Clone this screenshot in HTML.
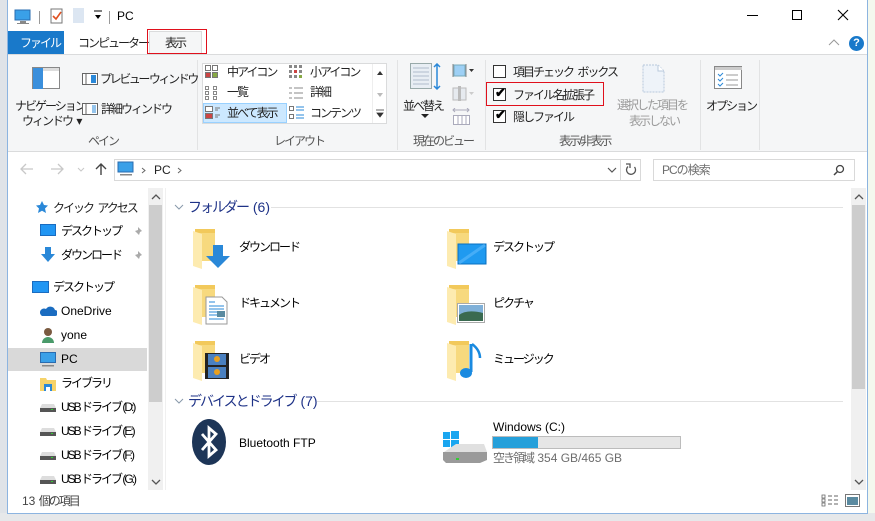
<!DOCTYPE html>
<html><head><meta charset="utf-8"><style>
*{margin:0;padding:0;box-sizing:border-box}
body{width:875px;height:521px;overflow:hidden;background:#e9ecef;font-family:"Liberation Sans","Noto Sans CJK JP",sans-serif;font-size:12px;color:#000;position:relative;letter-spacing:-2px;word-spacing:3px}
.a{position:absolute;white-space:nowrap}
.t{position:absolute;white-space:nowrap;line-height:14px}
.l{letter-spacing:0;word-spacing:0}
.m{letter-spacing:-1px}
.u{letter-spacing:-2px;word-spacing:0}
.sep{position:absolute;width:1px;background:#e2e3e4}
.cb{position:absolute;width:13px;height:13px;border:1px solid #333;background:#fff}
.ck{position:absolute;left:1px;top:-3px;font-size:13px;font-weight:bold;line-height:14px;letter-spacing:0}
.nav{position:absolute;left:61px;white-space:nowrap;line-height:14px}
</style></head><body>
<div class="a" style="left:867px;top:0;width:8px;height:521px;background:#f4f8ee"></div>
<div class="a" style="left:0;top:0;width:7px;height:521px;background:#dfe3e8"></div>
<div class="a" style="left:0;top:513px;width:875px;height:8px;background:#e6e8ea"></div>
<div class="a" style="left:7px;top:0;width:861px;height:514px;background:#fff;border:1px solid #8cb4e0;border-top:none"></div>
<!-- title bar -->
<svg class="a" style="left:14px;top:9px" width="18" height="16"><rect x="1" y="1" width="15" height="10" fill="#3aa0e8" stroke="#2a6cb0"/><rect x="6" y="12" width="6" height="2" fill="#888"/><rect x="3" y="14" width="12" height="1" fill="#888"/></svg>
<div class="a" style="left:39px;top:11px;width:1px;height:13px;background:#999"></div>
<svg class="a" style="left:50px;top:7px" width="14" height="18"><rect x="1" y="2" width="11" height="14" fill="#fff" stroke="#777"/><path d="M3 9l3 3 5-7" stroke="#e05020" stroke-width="1.6" fill="none"/></svg>
<svg class="a" style="left:73px;top:8px" width="14" height="16"><rect x="0" y="0" width="11" height="15" fill="#dce6f2"/></svg>
<svg class="a" style="left:93px;top:10px" width="10" height="10"><path d="M1 1h8" stroke="#000"/><path d="M2 5h6l-3 4z" fill="#000"/></svg>
<div class="a" style="left:109px;top:11px;width:1px;height:13px;background:#999"></div>
<div class="t l" style="left:117px;top:9px">PC</div>
<div class="a" style="left:747px;top:15px;width:11px;height:1px;background:#000"></div>
<div class="a" style="left:792px;top:10px;width:10px;height:10px;border:1px solid #000"></div>
<svg class="a" style="left:837px;top:9px" width="12" height="12"><path d="M1 1L11 11M11 1L1 11" stroke="#000" stroke-width="1.1"/></svg>
<!-- tabs -->
<div class="a" style="left:8px;top:31px;width:56px;height:23px;background:#1979ca"></div>
<div class="t" style="left:20px;top:36px;color:#fff">ファイル</div>
<div class="t" style="left:78px;top:36px;color:#222">コンピューター</div>
<div class="a" style="left:149px;top:31px;width:53px;height:24px;background:#f5f6f7;border:1px solid #dadbdc;border-bottom:none"></div>
<div class="a" style="left:147px;top:29px;width:60px;height:25px;border:1px solid #e0101c"></div>
<div class="t" style="left:165px;top:36px;color:#222">表示</div>
<svg class="a" style="left:828px;top:39px" width="12" height="8"><path d="M1 6L6 1L11 6" stroke="#999" fill="none"/></svg>
<div class="a l" style="left:849px;top:36px;width:15px;height:15px;border-radius:50%;background:#1979ca;color:#fff;font-weight:bold;font-size:11px;text-align:center;line-height:15px">?</div>
<!-- ribbon -->
<div class="a" style="left:8px;top:54px;width:859px;height:98px;background:#f5f6f7;border-top:1px solid #dadbdc;border-bottom:1px solid #dadbdc"></div>
<div class="sep" style="left:197px;top:60px;height:90px"></div>
<div class="sep" style="left:397px;top:60px;height:90px"></div>
<div class="sep" style="left:485px;top:60px;height:90px"></div>
<div class="sep" style="left:700px;top:60px;height:90px"></div>
<div class="sep" style="left:759px;top:60px;height:90px"></div>
<svg class="a" style="left:32px;top:67px" width="28" height="23"><rect x="0.5" y="0.5" width="27" height="21" fill="#fff" stroke="#888"/><rect x="1" y="1" width="10" height="21" fill="#3a8fdc"/><rect x="11" y="1" width="16" height="3" fill="#ddd"/></svg>
<div class="t" style="left:15px;top:99px;color:#222">ナビゲーション</div>
<div class="t" style="left:22px;top:114px;color:#222">ウィンドウ ▾</div>
<svg class="a" style="left:82px;top:73px" width="16" height="12"><rect x="0.5" y="0.5" width="15" height="11" fill="#fff" stroke="#666"/><rect x="9" y="2" width="5" height="8" fill="#2a88d8"/><line x1="4" y1="1" x2="4" y2="11" stroke="#666"/></svg>
<div class="t u" style="left:100px;top:72px;color:#222;letter-spacing:-2.4px">プレビュー ウィンドウ</div>
<svg class="a" style="left:82px;top:103px" width="16" height="12"><rect x="0.5" y="0.5" width="15" height="11" fill="#fff" stroke="#666"/><path d="M10 3h4M10 5h4M10 7h4M10 9h4" stroke="#2a88d8"/><line x1="4" y1="1" x2="4" y2="11" stroke="#666"/></svg>
<div class="t" style="left:101px;top:102px;color:#222">詳細ウィンドウ</div>
<div class="t" style="left:88px;top:134px;color:#555">ペイン</div>
<!-- layout -->
<div class="a" style="left:202px;top:63px;width:185px;height:61px;background:#fff;border:1px solid #dadbdc"></div>
<div class="a" style="left:203px;top:103px;width:84px;height:20px;background:#cce8ff;border:1px solid #99d1ff"></div>
<svg class="a" style="left:205px;top:65px" width="14" height="14"><rect x="0.5" y="0.5" width="5" height="5" fill="#fff" stroke="#777"/><rect x="7.5" y="0.5" width="5" height="5" fill="#fff" stroke="#777"/><rect x="0.5" y="7.5" width="5" height="5" fill="#c44" stroke="#777"/><rect x="7.5" y="7.5" width="5" height="5" fill="#8a4" stroke="#777"/></svg>
<div class="t" style="left:227px;top:65px;color:#222">中アイコン</div>
<svg class="a" style="left:289px;top:65px" width="14" height="14"><g fill="#888"><rect x="0" y="0" width="3" height="3"/><rect x="5" y="0" width="3" height="3"/><rect x="10" y="0" width="3" height="3"/><rect x="0" y="5" width="3" height="3"/><rect x="5" y="5" width="3" height="3" fill="#c44"/><rect x="10" y="5" width="3" height="3"/><rect x="0" y="10" width="3" height="3"/><rect x="5" y="10" width="3" height="3"/><rect x="10" y="10" width="3" height="3" fill="#8a4"/></g></svg>
<div class="t" style="left:310px;top:65px;color:#222">小アイコン</div>
<svg class="a" style="left:205px;top:86px" width="14" height="14"><g fill="none" stroke="#888"><rect x="0.5" y="0.5" width="3" height="3"/><rect x="0.5" y="5.5" width="3" height="3"/><rect x="0.5" y="10.5" width="3" height="3"/><rect x="8.5" y="0.5" width="3" height="3"/><rect x="8.5" y="5.5" width="3" height="3"/><rect x="8.5" y="10.5" width="3" height="3"/></g></svg>
<div class="t" style="left:227px;top:85px;color:#222">一覧</div>
<svg class="a" style="left:289px;top:86px" width="14" height="14"><g stroke="#888"><path d="M0 2h3M5 2h9M0 7h3M5 7h9M0 12h3M5 12h9"/></g></svg>
<div class="t" style="left:310px;top:85px;color:#222">詳細</div>
<svg class="a" style="left:205px;top:106px" width="16" height="14"><rect x="0.5" y="0.5" width="7" height="5" fill="#fff" stroke="#777"/><rect x="0.5" y="7.5" width="7" height="5" fill="#c44" stroke="#777"/><path d="M10 2h5M10 4h3M10 9h5M10 11h3" stroke="#777"/></svg>
<div class="t" style="left:227px;top:106px;color:#222">並べて表示</div>
<svg class="a" style="left:289px;top:106px" width="16" height="14"><rect x="0.5" y="0.5" width="4" height="4" fill="#fff" stroke="#777"/><rect x="0.5" y="8.5" width="4" height="4" fill="#fff" stroke="#777"/><path d="M7 1h8M7 4h8M7 9h8M7 12h8" stroke="#2a88d8"/></svg>
<div class="t" style="left:310px;top:106px;color:#222">コンテンツ</div>
<div class="a" style="left:372px;top:64px;width:1px;height:59px;background:#eee"></div>
<svg class="a" style="left:375px;top:68px" width="10" height="50"><path d="M2 7l3-4 3 4z" fill="#333"/><path d="M2 25l3 4 3-4z" fill="#bbb"/><path d="M1 42h8M2 45l3 4 3-4z" fill="#333" stroke="#333" stroke-width=".8"/></svg>
<div class="t" style="left:274px;top:134px;color:#555">レイアウト</div>
<!-- current view -->
<svg class="a" style="left:410px;top:63px" width="32" height="30"><rect x="0.5" y="0.5" width="21" height="25" fill="#e8eef4" stroke="#9aa"/><path d="M3 5h16M3 9h16M3 13h16M3 17h16M3 21h16" stroke="#b0bccc"/><path d="M27 1v25M24 4l3-3 3 3M24 23l3 3 3-3" stroke="#2a88d8" stroke-width="1.5" fill="none"/></svg>
<div class="t" style="left:403px;top:99px;color:#222">並べ替え</div>
<svg class="a" style="left:421px;top:114px" width="8" height="5"><path d="M0 0h8l-4 4z" fill="#222"/></svg>
<svg class="a" style="left:452px;top:63px" width="24" height="16"><rect x="2" y="2" width="11" height="11" fill="#9ed0f5" stroke="#7ab"/><path d="M1 1v13M14 1v13" stroke="#888"/><path d="M17 6h5l-2.5 3z" fill="#333"/></svg>
<svg class="a" style="left:452px;top:86px" width="24" height="16"><rect x="1" y="2" width="13" height="12" fill="#e6eaef" stroke="#bbb"/><rect x="6" y="0" width="3" height="15" fill="#bbb"/><path d="M17 6h5l-2.5 3z" fill="#ccc"/></svg>
<svg class="a" style="left:452px;top:108px" width="20" height="18"><path d="M1 2h16M3 0l-2 2 2 2M15 0l2 2-2 2" stroke="#aab" fill="none"/><rect x="1.5" y="7.5" width="16" height="9" fill="#fff" stroke="#aab"/><path d="M6 8v8M10 8v8M14 8v8" stroke="#aab"/></svg>
<div class="t" style="left:413px;top:134px;color:#555">現在のビュー</div>
<!-- show/hide -->
<div class="cb" style="left:493px;top:65px"></div>
<div class="t" style="left:513px;top:65px;color:#222">項目チェック ボックス</div>
<div class="cb" style="left:493px;top:88px"><span class="ck">✔</span></div>
<div class="t" style="left:513px;top:88px;color:#222">ファイル名拡張子</div>
<div class="a" style="left:486px;top:82px;width:118px;height:24px;border:1px solid #e0101c"></div>
<div class="cb" style="left:493px;top:110px"><span class="ck">✔</span></div>
<div class="t" style="left:513px;top:110px;color:#222">隠しファイル</div>
<svg class="a" style="left:642px;top:64px" width="24" height="30"><path d="M1 1h15l6 6v21H1z" fill="#eef3f9" stroke="#b8c8dc" stroke-dasharray="2 1"/><path d="M16 1v6h6" fill="#fff" stroke="#b8c8dc"/></svg>
<div class="t" style="left:617px;top:98px;color:#9a9a9a">選択した項目を</div>
<div class="t" style="left:629px;top:114px;color:#9a9a9a">表示しない</div>
<div class="t" style="left:559px;top:134px;color:#555">表示/非表示</div>
<svg class="a" style="left:714px;top:66px" width="30" height="24"><rect x="0.5" y="0.5" width="27" height="22" fill="#fff" stroke="#888"/><rect x="1" y="1" width="27" height="3" fill="#ccc"/><path d="M4 8l2 2 3-3M4 13l2 2 3-3M4 18l2 2 3-3" stroke="#2a88d8" fill="none"/><path d="M12 9h12M12 14h12M12 19h12" stroke="#999"/></svg>
<div class="t" style="left:706px;top:99px;color:#222">オプション</div>
<!-- address bar -->
<svg class="a" style="left:20px;top:163px" width="14" height="12"><path d="M13 6H2M6 1L1 6l5 5" stroke="#c8c8c8" stroke-width="1.3" fill="none"/></svg>
<svg class="a" style="left:50px;top:163px" width="14" height="12"><path d="M1 6h11M8 1l5 5-5 5" stroke="#c8c8c8" stroke-width="1.3" fill="none"/></svg>
<svg class="a" style="left:77px;top:167px" width="8" height="5"><path d="M1 1l3 3 3-3" stroke="#c8c8c8" fill="none"/></svg>
<svg class="a" style="left:94px;top:162px" width="14" height="14"><path d="M7 13V2M2 7l5-5 5 5" stroke="#444" stroke-width="1.4" fill="none"/></svg>
<div class="a" style="left:114px;top:159px;width:527px;height:22px;border:1px solid #d9d9d9"></div>
<svg class="a" style="left:117px;top:161px" width="17" height="16"><rect x="1" y="1" width="15" height="10" fill="#3aa0e8" stroke="#2a6cb0"/><rect x="3" y="13" width="12" height="1.5" fill="#888"/></svg>
<svg class="a" style="left:141px;top:167px" width="5" height="7"><path d="M1 1l3 2.5L1 6" stroke="#666" fill="none"/></svg>
<div class="t l" style="left:154px;top:163px;color:#222">PC</div>
<svg class="a" style="left:177px;top:167px" width="5" height="7"><path d="M1 1l3 2.5L1 6" stroke="#666" fill="none"/></svg>
<svg class="a" style="left:607px;top:167px" width="10" height="6"><path d="M1 1l4 4 4-4" stroke="#555" stroke-width="1.2" fill="none"/></svg>
<div class="a" style="left:620px;top:160px;width:1px;height:20px;background:#d9d9d9"></div>
<svg class="a" style="left:624px;top:163px" width="14" height="14"><path d="M10.5 4A4.5 4.5 0 1 1 4 3.5" stroke="#555" stroke-width="1.3" fill="none"/><path d="M2 1h4v4" stroke="#555" stroke-width="1.3" fill="none"/></svg>
<div class="a" style="left:653px;top:159px;width:202px;height:22px;border:1px solid #d9d9d9"></div>
<div class="t m" style="left:662px;top:163px;color:#6d6d6d">PCの検索</div>
<svg class="a" style="left:833px;top:164px" width="12" height="12"><circle cx="7" cy="5" r="3.5" stroke="#444" stroke-width="1.3" fill="none"/><path d="M4.5 7.5L1 11" stroke="#444" stroke-width="1.5"/></svg>
<!-- nav pane -->
<svg width="0" height="0" style="position:absolute"><defs><g id="pin"><path d="M5 1l4 4-2 1-1 3-2-2-3 3 3-3-2-2 3-1z" fill="#aaa"/></g><g id="usb"><path d="M2 1h12l2 4H0z" fill="#ddd"/><rect x="0" y="5" width="16" height="4" fill="#555"/><rect x="11" y="6" width="2" height="1" fill="#3c3"/></g></defs></svg>
<svg class="a" style="left:34px;top:200px" width="14" height="14"><path d="M8 1l2 4 4 .5-3 3 1 4.5-4-2.3-4 2.3 1-4.5-3-3 4-.5z" fill="#2a88d8"/></svg>
<div class="t" style="left:53px;top:201px;color:#222">クイック アクセス</div>
<svg class="a" style="left:40px;top:224px" width="16" height="14"><rect x="0.5" y="0.5" width="15" height="11" fill="#2196f3" stroke="#1a6cc0"/></svg>
<div class="nav" style="top:224px">デスクトップ</div>
<svg class="a" style="left:133px;top:226px" width="10" height="10"><use href="#pin"/></svg>
<svg class="a" style="left:40px;top:247px" width="16" height="16"><path d="M5 0h6v7h4l-7 8-7-8h4z" fill="#2a88d8"/></svg>
<div class="nav" style="top:248px">ダウンロード</div>
<svg class="a" style="left:133px;top:250px" width="10" height="10"><use href="#pin"/></svg>
<svg class="a" style="left:32px;top:281px" width="17" height="14"><rect x="0.5" y="0.5" width="16" height="11" fill="#2196f3" stroke="#1a6cc0"/></svg>
<div class="t" style="left:53px;top:280px">デスクトップ</div>
<svg class="a" style="left:40px;top:305px" width="17" height="12"><path d="M2 11h13a3 3 0 0 0 0-6 5 5 0 0 0-9-1 3.5 3.5 0 0 0-4 7z" fill="#1a6cc0"/></svg>
<div class="nav l" style="top:304px">OneDrive</div>
<svg class="a" style="left:41px;top:327px" width="14" height="17"><circle cx="7" cy="5" r="4" fill="#7a5a40"/><path d="M1 16a6 6 0 0 1 12 0z" fill="#4a9a6a"/></svg>
<div class="nav l" style="top:328px">yone</div>
<div class="a" style="left:8px;top:348px;width:139px;height:23px;background:#d9d9d9"></div>
<svg class="a" style="left:40px;top:352px" width="17" height="16"><rect x="0.5" y="0.5" width="15" height="10" fill="#3aa0e8" stroke="#2a6cb0"/><rect x="2" y="13" width="12" height="1.5" fill="#888"/></svg>
<div class="nav l" style="top:352px">PC</div>
<svg class="a" style="left:40px;top:376px" width="16" height="16"><path d="M0 2h6l1 2h9v11H0z" fill="#f6d36a"/><rect x="4" y="8" width="8" height="7" fill="#2a88d8"/><rect x="6" y="11" width="4" height="4" fill="#fff"/></svg>
<div class="nav" style="top:376px">ライブラリ</div>
<svg class="a" style="left:40px;top:403px" width="16" height="10"><use href="#usb"/></svg>
<div class="nav u" style="top:400px">USB ドライブ (D:)</div>
<svg class="a" style="left:40px;top:427px" width="16" height="10"><use href="#usb"/></svg>
<div class="nav u" style="top:424px">USB ドライブ (E:)</div>
<svg class="a" style="left:40px;top:451px" width="16" height="10"><use href="#usb"/></svg>
<div class="nav u" style="top:448px">USB ドライブ (F:)</div>
<svg class="a" style="left:40px;top:475px" width="16" height="10"><use href="#usb"/></svg>
<div class="nav u" style="top:472px">USB ドライブ (G:)</div>
<div class="a" style="left:148px;top:188px;width:15px;height:302px;background:#f0f0f0"></div>
<div class="a" style="left:149px;top:205px;width:13px;height:197px;background:#cdcdcd"></div>
<svg class="a" style="left:151px;top:194px" width="10" height="6"><path d="M1 5l4-4 4 4" stroke="#555" stroke-width="1.3" fill="none"/></svg>
<svg class="a" style="left:151px;top:479px" width="10" height="6"><path d="M1 1l4 4 4-4" stroke="#555" stroke-width="1.3" fill="none"/></svg>
<div class="a" style="left:165px;top:188px;width:1px;height:302px;background:#f0f0f0"></div>
<!-- content -->
<svg class="a" style="left:174px;top:204px" width="10" height="6"><path d="M1 1l4 4 4-4" stroke="#8899aa" fill="none"/></svg>
<div class="t" style="left:188px;top:199px;color:#1e3287;font-size:14px;line-height:16px">フォルダー <span class="l">(6)</span></div>
<div class="a" style="left:271px;top:207px;width:572px;height:1px;background:#e2e2e2"></div>
<svg width="0" height="0" style="position:absolute"><defs><g id="fd"><path d="M2 0h20v32H2z" fill="#f2c95b"/><path d="M2 4h20v28H2z" fill="#f7d97e"/><path d="M0 2l9 3v35l-9-3z" fill="#fdebb0"/></g></defs></svg>
<svg class="a" style="left:193px;top:229px" width="42" height="40"><use href="#fd"/><path d="M20 16h10v11h7l-12 12-12-12h7z" fill="#2a88d8"/></svg>
<div class="t" style="left:239px;top:240px">ダウンロード</div>
<svg class="a" style="left:193px;top:285px" width="42" height="40"><use href="#fd"/><path d="M13 12h16l5 5v22H13z" fill="#fff" stroke="#999"/><path d="M16 17h6M16 21h15M16 24h15M16 27h8M16 30h15M16 34h15" stroke="#2a88d8"/><rect x="24" y="26" width="8" height="6" fill="#5a8aa0"/></svg>
<div class="t" style="left:239px;top:296px">ドキュメント</div>
<svg class="a" style="left:193px;top:341px" width="42" height="40"><use href="#fd"/><rect x="12" y="12" width="24" height="26" fill="#222"/><rect x="15" y="13" width="18" height="11" fill="#4a80c0"/><rect x="15" y="26" width="18" height="11" fill="#4a80c0"/><circle cx="24" cy="18" r="3" fill="#e8a020"/><circle cx="24" cy="31" r="3" fill="#e8a020"/></svg>
<div class="t" style="left:239px;top:352px">ビデオ</div>
<svg class="a" style="left:447px;top:229px" width="42" height="40"><use href="#fd"/><rect x="11" y="15" width="28" height="20" fill="#1f9af0" stroke="#0a70c0"/><path d="M12 34L38 16" stroke="#6cc0ff" stroke-width="3" opacity=".5"/></svg>
<div class="t" style="left:493px;top:240px">デスクトップ</div>
<svg class="a" style="left:447px;top:285px" width="42" height="40"><use href="#fd"/><rect x="10.5" y="18.5" width="27" height="19" fill="#fff" stroke="#aaa"/><rect x="12" y="20" width="24" height="16" fill="#7fb0d8"/><path d="M12 30q8-6 24-2v8H12z" fill="#3a6a50"/></svg>
<div class="t" style="left:493px;top:296px">ピクチャ</div>
<svg class="a" style="left:447px;top:341px" width="42" height="40"><use href="#fd"/><path d="M24 3v28" stroke="#1a8ae0" stroke-width="3"/><ellipse cx="19" cy="32" rx="6" ry="5" fill="#1a8ae0"/><path d="M25 3q8 6 8 14" stroke="#1a8ae0" stroke-width="2.5" fill="none"/></svg>
<div class="t" style="left:493px;top:352px">ミュージック</div>
<svg class="a" style="left:174px;top:398px" width="10" height="6"><path d="M1 1l4 4 4-4" stroke="#8899aa" fill="none"/></svg>
<div class="t" style="left:188px;top:393px;color:#1e3287;font-size:14px;line-height:16px">デバイスとドライブ <span class="l">(7)</span></div>
<div class="a" style="left:317px;top:401px;width:526px;height:1px;background:#e2e2e2"></div>
<svg class="a" style="left:191px;top:419px" width="38" height="48"><ellipse cx="18" cy="23" rx="17" ry="23" fill="#1d3557"/><path d="M11 15l14 16-7 6V9l7 6-14 16" stroke="#fff" stroke-width="2.8" fill="none"/></svg>
<div class="t l" style="left:239px;top:436px">Bluetooth FTP</div>
<svg class="a" style="left:442px;top:430px" width="46" height="36"><g fill="#1aa6f0"><rect x="1" y="2" width="7" height="7"/><rect x="9" y="1" width="8" height="8"/><rect x="1" y="10" width="7" height="7"/><rect x="9" y="10" width="8" height="8"/></g><path d="M2 22l12-8h28l3 8z" fill="#e0e0e0"/><path d="M1 22h44v8l-7 3H4l-3-3z" fill="#9a9a9a"/><rect x="14" y="28" width="3" height="2" fill="#3c3"/></svg>
<div class="t l" style="left:493px;top:420px">Windows (C:)</div>
<div class="a" style="left:492px;top:436px;width:189px;height:13px;background:#e6e6e6;border:1px solid #bcbcbc"></div>
<div class="a" style="left:493px;top:437px;width:45px;height:11px;background:#26a0da"></div>
<div class="t" style="left:493px;top:451px;color:#6d6d6d">空き領域 <span class="l">354 GB/465 GB</span></div>
<div class="a" style="left:851px;top:188px;width:15px;height:302px;background:#f0f0f0"></div>
<div class="a" style="left:852px;top:205px;width:13px;height:184px;background:#cdcdcd"></div>
<svg class="a" style="left:854px;top:194px" width="10" height="6"><path d="M1 5l4-4 4 4" stroke="#555" stroke-width="1.3" fill="none"/></svg>
<svg class="a" style="left:854px;top:479px" width="10" height="6"><path d="M1 1l4 4 4-4" stroke="#555" stroke-width="1.3" fill="none"/></svg>
<!-- status -->
<div class="t" style="left:22px;top:494px;color:#444"><span class="l">13 </span>個の項目</div>
<svg class="a" style="left:821px;top:494px" width="18" height="14"><path d="M1 1h3v3H1zM1 5h3v3H1zM1 9h3v3H1z" fill="none" stroke="#666" stroke-width=".8"/><path d="M7 2h4M13 2h4M7 6h4M13 6h4M7 10h4M13 10h4" stroke="#666"/></svg>
<svg class="a" style="left:845px;top:494px" width="16" height="14"><rect x="0.5" y="0.5" width="14" height="12" fill="#fff" stroke="#777"/><rect x="2" y="3" width="11" height="8" fill="#5a8aa0"/></svg>
</body></html>
